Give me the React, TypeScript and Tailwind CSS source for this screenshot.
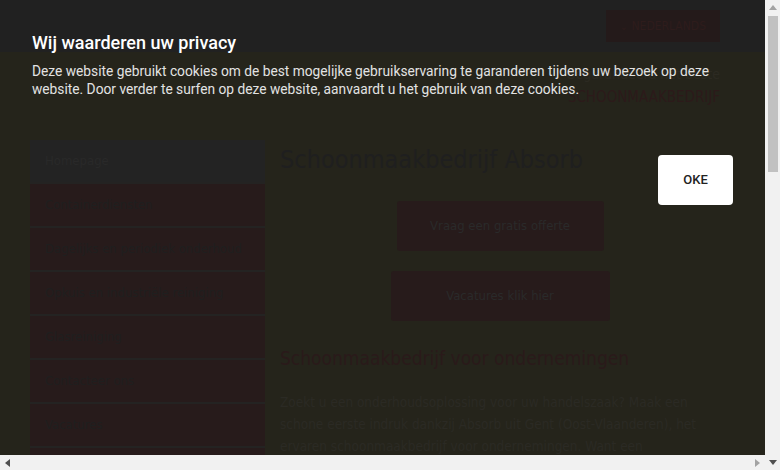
import React from 'react';

const cond = "font-['DejaVu_Sans',sans-serif] font-stretch-condensed";

function App() {
  const menu = [
    { label: 'Homepage', active: true },
    { label: 'Containerdiensten' },
    { label: 'Dagelijks en periodiek onderhoud' },
    { label: 'Opkuis en industriële reiniging' },
    { label: 'Glasreiniging' },
    { label: 'Contacteer ons' },
    { label: 'Vacatures' },
    { label: 'Referenties' },
  ];

  return (
    <div className="relative flex h-[470px] w-[780px] overflow-hidden bg-[#f1f1f1]">
      <div className="flex h-[470px] w-[765px] flex-col">
        {/* page under the overlay */}
        <div className={`relative h-[455px] w-[765px] overflow-hidden bg-[#25241b] ${cond}`}>
          <header className="flex h-[52px] items-start justify-end bg-[#212121] pt-[10px] pr-[45px]">
            <div className="flex h-[32px] w-[114px] items-center justify-center gap-1 bg-[#241a1a] text-[12px] text-[#2e1c1c]">
              <span className="text-[10px]">&#8964;</span>
              <span>NEDERLANDS</span>
            </div>
          </header>

          <div className="flex flex-col items-end pr-[45px] pt-[12px]">
            <span className="text-[14px] leading-[20px] text-[#2c2a22]">Gegarandeerd het beste</span>
            <span className="text-[15px] leading-[26px] text-[#2c1a1a]">SCHOONMAAKBEDRIJF</span>
          </div>

          <div className="mt-[30px] flex gap-[15px] px-[30px]">
            <nav className="flex w-[235px] shrink-0 flex-col gap-[2px] bg-[#242322]">
              {menu.map((item) => (
                <div
                  key={item.label}
                  className={`flex h-[42px] items-center px-[15px] text-[13px] whitespace-nowrap ${
                    item.active ? 'bg-[#232323] text-[#292929]' : 'bg-[#271b1b] text-[#1f1f1f]'
                  }`}
                >
                  {item.label}
                </div>
              ))}
            </nav>

            <main className="w-[440px]">
              <h1 className="mt-[2px] text-[25px] leading-[36px] text-[#1f1f1f]">Schoonmaakbedrijf Absorb</h1>
              <div className="mt-[23px] flex flex-col items-center gap-[20px]">
                <div className="flex h-[50px] w-[207px] items-center justify-center rounded-[3px] bg-[#271b1b] text-[13px] text-[#2a2a2a]">
                  Vraag een gratis offerte
                </div>
                <div className="flex h-[50px] w-[219px] items-center justify-center rounded-[3px] bg-[#271b1b] text-[13px] text-[#2a2a2a]">
                  Vacatures klik hier
                </div>
              </div>
              <h2 className="mt-[22px] text-[19px] leading-[30px] whitespace-nowrap text-[#2a1a1a]">
                Schoonmaakbedrijf voor ondernemingen
              </h2>
              <p className="mt-[18px] w-[425px] text-[13.5px] leading-[22px] text-[#2b2a24]">
                Zoekt u een onderhoudsoplossing voor uw handelszaak? Maak een schone eerste indruk dankzij Absorb uit Gent
                (Oost-Vlaanderen), het ervaren schoonmaakbedrijf voor ondernemingen. Want een vlekkeloos interieur straalt
                professionaliteit uit.
              </p>
            </main>
          </div>

          {/* cookie notice */}
          <div className="absolute inset-0 font-['Roboto',sans-serif] font-stretch-normal">
            <div className="pl-[32px] pt-[32px] pr-[32px]">
              <h3 className="text-[18px] font-medium leading-[22px] text-white">Wij waarderen uw privacy</h3>
              <p className="mt-[8px] pr-[20px] text-[13.75px] leading-[18px] text-[#e2e2e2]">
                Deze website gebruikt cookies om de best mogelijke gebruikservaring te garanderen tijdens uw bezoek op deze
                website. Door verder te surfen op deze website, aanvaardt u het gebruik van deze cookies.
              </p>
              <div className="mt-[57px] flex justify-end">
                <button className="h-[50px] w-[75px] rounded-[4px] bg-white text-[13px] font-medium text-[#222]">OKE</button>
              </div>
            </div>
          </div>
        </div>

        {/* horizontal scrollbar */}
        <div className="flex h-[15px] w-[765px] items-center justify-between bg-[#f1f1f1] px-[5px]">
          <svg width="5" height="8" viewBox="0 0 5 8"><path d="M5 0V8L0 4Z" fill="#505050" /></svg>
          <svg width="5" height="8" viewBox="0 0 5 8"><path d="M0 0V8L5 4Z" fill="#a3a3a3" /></svg>
        </div>
      </div>

      {/* vertical scrollbar */}
      <div className="flex h-[470px] w-[15px] flex-col items-center bg-[#f1f1f1]">
        <div className="flex h-[15px] items-center justify-center">
          <svg width="8" height="5" viewBox="0 0 8 5"><path d="M0 5H8L4 0Z" fill="#a3a3a3" /></svg>
        </div>
        <div className="mt-[1px] h-[156px] w-[10px] bg-[#c1c1c1]" />
        <div className="flex-1" />
        <div className="flex h-[15px] items-center justify-center">
          <svg width="8" height="5" viewBox="0 0 8 5"><path d="M0 0H8L4 5Z" fill="#505050" /></svg>
        </div>
      </div>
    </div>
  );
}

export default App;
